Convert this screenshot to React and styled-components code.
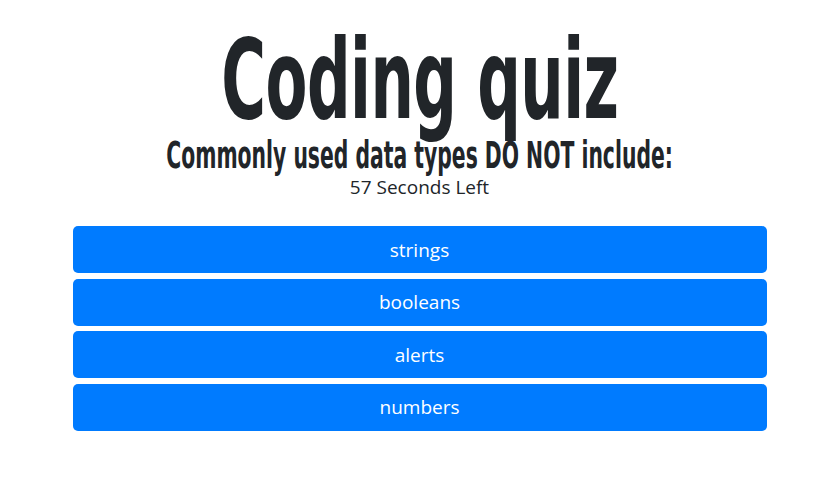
import React from 'react';
import styled, { createGlobalStyle } from 'styled-components';

const GlobalStyle = createGlobalStyle`
  body {
    margin: 0;
    background: #fff;
    color: #212529;
    font-family: "Open Sans", "Noto Sans", sans-serif;
  }
`;

const choices = ['strings', 'booleans', 'alerts', 'numbers'];

export default function App() {
  return (
    <>
      <GlobalStyle />
      <Container>
        <Title>
          <Squeeze $scale={0.555}>Coding quiz</Squeeze>
        </Title>
        <Question>
          <Squeeze $scale={0.55}>Commonly used data types DO NOT include:</Squeeze>
        </Question>
        <Timer>57 Seconds Left</Timer>
        <Choices>
          {choices.map((c) => (
            <Choice key={c}>{c}</Choice>
          ))}
        </Choices>
      </Container>
    </>
  );
}

const Container = styled.div`
  width: 694px;
  margin: 0 auto;
  padding-top: 24px;
  display: flex;
  flex-direction: column;
  align-items: center;
`;

const Squeeze = styled.span`
  display: inline-block;
  transform: scaleX(${(p) => p.$scale});
  white-space: nowrap;
`;

const Title = styled.h1`
  margin: 0;
  font-family: "DejaVu Sans", sans-serif;
  font-weight: 700;
  font-size: 110px;
  line-height: 112px;
  letter-spacing: -1px;
  color: #212529;
`;

const Question = styled.h2`
  margin: 0;
  font-family: "DejaVu Sans", sans-serif;
  font-weight: 700;
  font-size: 37px;
  line-height: 40px;
  color: #212529;
`;

const Timer = styled.div`
  font-size: 19px;
  line-height: 22px;
  color: #212529;
`;

const Choices = styled.div`
  width: 100%;
  margin-top: 28px;
  display: flex;
  flex-direction: column;
  gap: 5.5px;
`;

const Choice = styled.button`
  width: 100%;
  height: 47px;
  border: none;
  border-radius: 5px;
  background: #007bff;
  color: #fff;
  font-family: "Open Sans", "Noto Sans", sans-serif;
  font-size: 19px;
  cursor: pointer;
`;
